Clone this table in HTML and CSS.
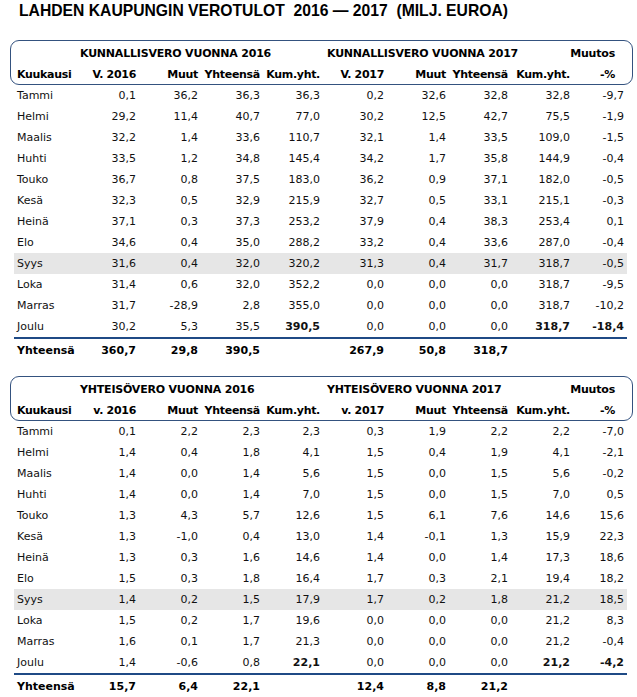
FILE: index.html
```html
<!DOCTYPE html>
<html lang="fi">
<head>
<meta charset="utf-8">
<title>Lahden kaupungin verotulot</title>
<link rel="stylesheet" href="styles.css">
</head>
<body>
<h1 class="title">LAHDEN KAUPUNGIN VEROTULOT&nbsp; 2016 — 2017&nbsp; (MILJ. EUROA)</h1>

<section class="tax">
  <div class="head">
    <div class="grid hrow1">
      <span class="grp1">KUNNALLISVERO VUONNA 2016</span>
      <span class="grp2">KUNNALLISVERO VUONNA 2017</span>
      <span class="muutos">Muutos</span>
    </div>
    <div class="grid hrow2">
      <span>Kuukausi</span><span>V. 2016</span><span>Muut</span><span>Yhteensä</span><span>Kum.yht.</span><span>V. 2017</span><span>Muut</span><span>Yhteensä</span><span>Kum.yht.</span><span class="pct">-%</span>
    </div>
  </div>
  <div class="body">
    <div class="grid row"><span>Tammi</span><span>0,1</span><span>36,2</span><span>36,3</span><span>36,3</span><span>0,2</span><span>32,6</span><span>32,8</span><span>32,8</span><span>-9,7</span></div>
    <div class="grid row"><span>Helmi</span><span>29,2</span><span>11,4</span><span>40,7</span><span>77,0</span><span>30,2</span><span>12,5</span><span>42,7</span><span>75,5</span><span>-1,9</span></div>
    <div class="grid row"><span>Maalis</span><span>32,2</span><span>1,4</span><span>33,6</span><span>110,7</span><span>32,1</span><span>1,4</span><span>33,5</span><span>109,0</span><span>-1,5</span></div>
    <div class="grid row"><span>Huhti</span><span>33,5</span><span>1,2</span><span>34,8</span><span>145,4</span><span>34,2</span><span>1,7</span><span>35,8</span><span>144,9</span><span>-0,4</span></div>
    <div class="grid row"><span>Touko</span><span>36,7</span><span>0,8</span><span>37,5</span><span>183,0</span><span>36,2</span><span>0,9</span><span>37,1</span><span>182,0</span><span>-0,5</span></div>
    <div class="grid row"><span>Kesä</span><span>32,3</span><span>0,5</span><span>32,9</span><span>215,9</span><span>32,7</span><span>0,5</span><span>33,1</span><span>215,1</span><span>-0,3</span></div>
    <div class="grid row"><span>Heinä</span><span>37,1</span><span>0,3</span><span>37,3</span><span>253,2</span><span>37,9</span><span>0,4</span><span>38,3</span><span>253,4</span><span>0,1</span></div>
    <div class="grid row"><span>Elo</span><span>34,6</span><span>0,4</span><span>35,0</span><span>288,2</span><span>33,2</span><span>0,4</span><span>33,6</span><span>287,0</span><span>-0,4</span></div>
    <div class="grid row shaded"><span>Syys</span><span>31,6</span><span>0,4</span><span>32,0</span><span>320,2</span><span>31,3</span><span>0,4</span><span>31,7</span><span>318,7</span><span>-0,5</span></div>
    <div class="grid row"><span>Loka</span><span>31,4</span><span>0,6</span><span>32,0</span><span>352,2</span><span>0,0</span><span>0,0</span><span>0,0</span><span>318,7</span><span>-9,5</span></div>
    <div class="grid row"><span>Marras</span><span>31,7</span><span>-28,9</span><span>2,8</span><span>355,0</span><span>0,0</span><span>0,0</span><span>0,0</span><span>318,7</span><span>-10,2</span></div>
    <div class="grid row"><span>Joulu</span><span>30,2</span><span>5,3</span><span>35,5</span><span class="b">390,5</span><span>0,0</span><span>0,0</span><span>0,0</span><span class="b">318,7</span><span class="b">-18,4</span></div>
  </div>
  <div class="grid total">
    <span>Yhteensä</span><span>360,7</span><span>29,8</span><span>390,5</span><span></span><span>267,9</span><span>50,8</span><span>318,7</span><span></span><span></span>
  </div>
</section>

<section class="tax second">
  <div class="head">
    <div class="grid hrow1">
      <span class="grp1">YHTEISÖVERO VUONNA 2016</span>
      <span class="grp2">YHTEISÖVERO VUONNA 2017</span>
      <span class="muutos">Muutos</span>
    </div>
    <div class="grid hrow2">
      <span>Kuukausi</span><span>v. 2016</span><span>Muut</span><span>Yhteensä</span><span>Kum.yht.</span><span>v. 2017</span><span>Muut</span><span>Yhteensä</span><span>Kum.yht.</span><span class="pct">-%</span>
    </div>
  </div>
  <div class="body">
    <div class="grid row"><span>Tammi</span><span>0,1</span><span>2,2</span><span>2,3</span><span>2,3</span><span>0,3</span><span>1,9</span><span>2,2</span><span>2,2</span><span>-7,0</span></div>
    <div class="grid row"><span>Helmi</span><span>1,4</span><span>0,4</span><span>1,8</span><span>4,1</span><span>1,5</span><span>0,4</span><span>1,9</span><span>4,1</span><span>-2,1</span></div>
    <div class="grid row"><span>Maalis</span><span>1,4</span><span>0,0</span><span>1,4</span><span>5,6</span><span>1,5</span><span>0,0</span><span>1,5</span><span>5,6</span><span>-0,2</span></div>
    <div class="grid row"><span>Huhti</span><span>1,4</span><span>0,0</span><span>1,4</span><span>7,0</span><span>1,5</span><span>0,0</span><span>1,5</span><span>7,0</span><span>0,5</span></div>
    <div class="grid row"><span>Touko</span><span>1,3</span><span>4,3</span><span>5,7</span><span>12,6</span><span>1,5</span><span>6,1</span><span>7,6</span><span>14,6</span><span>15,6</span></div>
    <div class="grid row"><span>Kesä</span><span>1,3</span><span>-1,0</span><span>0,4</span><span>13,0</span><span>1,4</span><span>-0,1</span><span>1,3</span><span>15,9</span><span>22,3</span></div>
    <div class="grid row"><span>Heinä</span><span>1,3</span><span>0,3</span><span>1,6</span><span>14,6</span><span>1,4</span><span>0,0</span><span>1,4</span><span>17,3</span><span>18,6</span></div>
    <div class="grid row"><span>Elo</span><span>1,5</span><span>0,3</span><span>1,8</span><span>16,4</span><span>1,7</span><span>0,3</span><span>2,1</span><span>19,4</span><span>18,2</span></div>
    <div class="grid row shaded"><span>Syys</span><span>1,4</span><span>0,2</span><span>1,5</span><span>17,9</span><span>1,7</span><span>0,2</span><span>1,8</span><span>21,2</span><span>18,5</span></div>
    <div class="grid row"><span>Loka</span><span>1,5</span><span>0,2</span><span>1,7</span><span>19,6</span><span>0,0</span><span>0,0</span><span>0,0</span><span>21,2</span><span>8,3</span></div>
    <div class="grid row"><span>Marras</span><span>1,6</span><span>0,1</span><span>1,7</span><span>21,3</span><span>0,0</span><span>0,0</span><span>0,0</span><span>21,2</span><span>-0,4</span></div>
    <div class="grid row"><span>Joulu</span><span>1,4</span><span>-0,6</span><span>0,8</span><span class="b">22,1</span><span>0,0</span><span>0,0</span><span>0,0</span><span class="b">21,2</span><span class="b">-4,2</span></div>
  </div>
  <div class="grid total">
    <span>Yhteensä</span><span>15,7</span><span>6,4</span><span>22,1</span><span></span><span>12,4</span><span>8,8</span><span>21,2</span><span></span><span></span>
  </div>
</section>
</body>
</html>
```

FILE: styles.css
```css
html, body {
  margin: 0;
  padding: 0;
  background: #ffffff;
}

body {
  width: 637px;
  font-family: "DejaVu Sans", Verdana, sans-serif;
  font-size: 11px;
  color: #111111;
}

.title {
  margin: 0;
  padding: 0 0 0 19px;
  height: 40px;
  line-height: 22px;
  font-family: "Liberation Sans", Arial, sans-serif;
  font-size: 15.7px;
  font-weight: bold;
  color: #000000;
  white-space: nowrap;
}

.tax {
  margin-left: 10px;
  width: 623px;
}

.tax.second {
  margin-top: 15px;
}

.grid {
  display: grid;
  grid-template-columns: 62px 64px 62px 62px 60px 64px 62px 62px 62px 53px;
  white-space: nowrap;
}

.head {
  border: 1px solid #34527f;
  border-radius: 9px;
  padding: 0 5px 0 3px;
  height: 43px;
  font-weight: bold;
  color: #000000;
}

.hrow1 {
  height: 25px;
  line-height: 26px;
  letter-spacing: -0.2px;
}

.hrow2 {
  height: 18px;
  line-height: 18px;
  letter-spacing: -0.3px;
}

.grp1 {
  grid-column: 2 / span 4;
  padding-left: 4px;
}

.grp2 {
  grid-column: 6 / span 3;
  padding-left: 3px;
}

.muutos {
  grid-column: 9 / span 2;
  text-align: right;
  padding-right: 12px;
}

.hrow2 span,
.row span,
.total span {
  text-align: right;
  padding-right: 4px;
}

.hrow2 span:first-child,
.row span:first-child,
.total span:first-child {
  text-align: left;
  padding-left: 3px;
  padding-right: 0;
}

.hrow2 .pct {
  padding-right: 12px;
}

.row span:last-child {
  padding-right: 3px;
}

.body {
  margin: 0 6px 0 4px;
}

.row {
  height: 21px;
  line-height: 21px;
}

.row.shaded {
  background: #e6e6e6;
}

.b {
  font-weight: bold;
}

.total {
  margin: 0 6px 0 4px;
  border-top: 2px solid #1f4a85;
  height: 22px;
  line-height: 23px;
  font-weight: bold;
  color: #000000;
}
```
